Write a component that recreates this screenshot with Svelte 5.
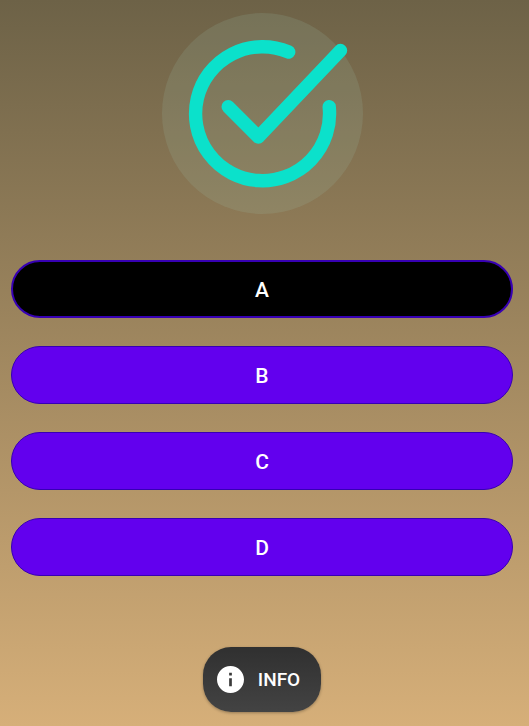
<script>
  const options = ['A', 'B', 'C', 'D'];
  let selected = $state('A');
</script>

<main>
  <svg class="badge" viewBox="0 0 201 201" role="img" aria-label="Correct">
    <circle cx="100.5" cy="100.5" r="100.5" fill="#a4ccb4" fill-opacity="0.15" />
    <g fill="none" stroke="#0be1cb" stroke-width="13.4" stroke-linecap="round" stroke-linejoin="round">
      <path d="M126.7 39A67 67 0 1 0 167.2 93.7" />
      <path d="M66.2 93.7L96.4 124L178.5 37.5" />
    </g>
  </svg>

  <div class="options">
    {#each options as option}
      <button
        class="option"
        class:selected={selected === option}
        aria-pressed={selected === option}
        onclick={() => (selected = option)}>{option}</button>
    {/each}
  </div>

  <button class="info">
    <svg viewBox="2 2 20 20" aria-hidden="true">
      <path
        fill="#fff"
        d="M12 2C6.48 2 2 6.48 2 12s4.48 10 10 10 10-4.48 10-10S17.52 2 12 2zm1 15h-2v-6h2v6zm0-8h-2V7h2v2z"
      />
    </svg>
    INFO
  </button>
</main>

<style>
  :global(body) {
    margin: 0;
  }

  main {
    box-sizing: border-box;
    min-height: 100vh;
    padding: 13px 16px 14px 11px;
    display: flex;
    flex-direction: column;
    align-items: center;
    background: linear-gradient(#6d6247, #d6af79);
    font-family: Roboto, sans-serif;
  }

  .badge {
    width: 201px;
    height: 201px;
    flex: none;
  }

  .options {
    align-self: stretch;
    display: flex;
    flex-direction: column;
    gap: 28px;
    margin: 46px 0 71px;
  }

  button {
    box-sizing: border-box;
    color: #fff;
    font-family: inherit;
    font-weight: 500;
    cursor: pointer;
  }

  .option {
    height: 58px;
    padding: 2px 0 0;
    border: 1px solid #3700b3;
    border-radius: 29px;
    background: #6200ee;
    font-size: 21px;
    line-height: 24px;
  }

  .option.selected {
    border-width: 2px;
    background: #000;
  }

  .info {
    display: flex;
    align-items: center;
    gap: 14px;
    height: 65px;
    padding: 0 21px 0 14px;
    border: 0;
    border-radius: 28px;
    background: linear-gradient(#303030, #434343);
    box-shadow: 0 1px 3px rgba(0, 0, 0, 0.3);
    font-size: 19px;
    line-height: 24px;
  }

  .info svg {
    width: 27px;
    height: 27px;
  }
</style>
